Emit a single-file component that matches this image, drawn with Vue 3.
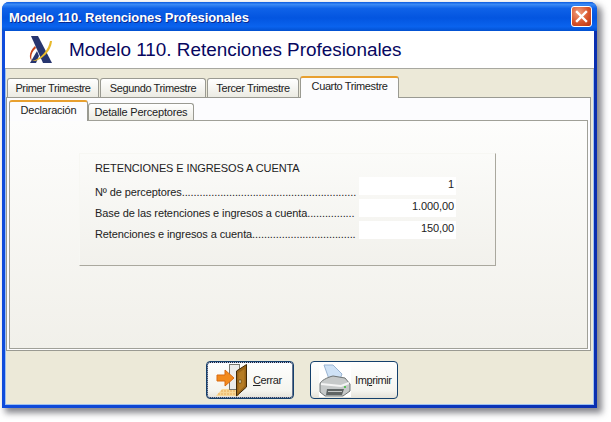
<script setup>
const outerTabs = [
  { label: 'Primer Trimestre', w: 92 },
  { label: 'Segundo Trimestre', w: 106 },
  { label: 'Tercer Trimestre', w: 92 },
  { label: 'Cuarto Trimestre', w: 99, active: true },
]
const rows = [
  { label: 'Nº de perceptores', dots: 59, value: '1' },
  { label: 'Base de las retenciones e ingresos a cuenta', dots: 16, value: '1.000,00' },
  { label: 'Retenciones e ingresos a cuenta', dots: 35, value: '150,00' },
]
</script>

<template>
  <div class="page">
    <div class="window">
      <div class="titlebar">
        <span class="title">Modelo 110. Retenciones Profesionales</span>
        <button class="close" aria-label="Cerrar">
          <svg width="13" height="13" viewBox="0 0 13 13"><path d="M2 2 L11 11 M11 2 L2 11" stroke="#fff" stroke-width="2.4" stroke-linecap="square" fill="none" /></svg>
        </button>
      </div>
      <div class="client">
        <div class="header">
          <svg class="logo" width="25" height="29" viewBox="0 0 25 29">
            <path d="M2 1 H9 L23 28 H14 Z" fill="#27356f" />
            <path d="M1 28 L8 16 L10 21 L7 28 Z" fill="#27356f" />
            <path d="M6 11 C1 15 -1 23 3 26 C1 22 3 16 7 13 Z" fill="#c8441a" />
            <path d="M21 6 C20 14 12 24 3 26 C10 27 22 18 23 6 Z" fill="#e8b92c" />
          </svg>
          <span class="heading">Modelo 110. Retenciones Profesionales</span>
        </div>
        <div class="body">
          <div class="tabs outer">
            <div v-for="t in outerTabs" :key="t.label" class="tab" :class="{ active: t.active }" :style="{ width: t.w + 'px' }">{{ t.label }}</div>
          </div>
          <div class="outer-panel">
            <div class="tabs inner">
              <div class="tab active first">Declaración</div>
              <div class="tab second">Detalle Perceptores</div>
            </div>
            <div class="inner-panel">
              <section class="group">
                <h2 class="group-title">RETENCIONES E INGRESOS A CUENTA</h2>
                <div class="fields">
                  <div class="labels">
                    <span v-for="r in rows" :key="r.label" class="row-label">{{ r.label }}{{ '.'.repeat(r.dots) }}</span>
                  </div>
                  <div class="values">
                    <span v-for="r in rows" :key="r.label" class="row-value">{{ r.value }}</span>
                  </div>
                </div>
              </section>
            </div>
          </div>
          <div class="actions">
            <button class="btn focus">
              <svg width="34" height="34" viewBox="0 0 34 34">
                <path d="M1 33 L7 26 H24 V33 Z" fill="#f8d898" />
                <path d="M3 31 H23 M6 28 H23" stroke="#e8ac58" stroke-width="1" stroke-dasharray="2 1" />
                <rect x="14.5" y="1.5" width="10" height="25" fill="#ececea" stroke="#77776f" />
                <path d="M21.5 8 L31.5 1.5 V24 L21.5 33 Z" fill="#9a6518" stroke="#3f2806" />
                <path d="M23.5 10 L29.5 6 V23 L23.5 29 Z" fill="#b57c24" />
                <rect x="24" y="17" width="2" height="3" fill="#f5ecc0" stroke="#3f2806" stroke-width="0.5" />
                <path d="M2 12 H10 V7 L19 15 L10 23 V18 H2 Z" fill="#f28a1c" stroke="#d96a10" />
              </svg>
              <span class="btn-label"><u>C</u>errar</span>
            </button>
            <button class="btn">
              <svg class="printer" width="32" height="33" viewBox="0 0 32 33">
                <rect width="32" height="33" fill="#fff" />
                <path d="M5 1 H14 L23 10 L21 15 H10 Z" fill="#cfe2f6" stroke="#9ab4d2" />
                <path d="M1 20 C1 17 9 13 14 12 L26 14 L31 20 V27 L24 32 H6 L1 28 Z" fill="#c6c9c9" stroke="#6f7474" />
                <path d="M2 20 L22 22 L30 19" fill="none" stroke="#f4f4f4" stroke-width="2" />
                <path d="M8 25 H25 L23 31 H7 Z" fill="#5f6464" />
                <path d="M9 27.5 H23" stroke="#c5c8c8" />
                <rect x="25" y="22" width="2" height="2" fill="#5ac05a" />
              </svg>
              <span class="btn-label">Im<u>p</u>rimir</span>
            </button>
          </div>
        </div>
      </div>
    </div>
  </div>
</template>

<style>
html, body { margin: 0; background: #fff; }
</style>

<style scoped>
.page {
  width: 611px;
  height: 422px;
  padding: 2px 0 0 2px;
  box-sizing: border-box;
  background: #fff;
  overflow: hidden;
  font-family: "Liberation Sans", Arial, sans-serif;
}
.window {
  width: 595px;
  height: 406px;
  display: flex;
  flex-direction: column;
  border-radius: 7px 7px 0 0;
  background: linear-gradient(to right, #0f4cdc, #0a2fb0);
  box-shadow: 4px 4px 6px 1px rgba(70, 70, 80, 0.65);
  padding: 0 3px 3px;
  box-sizing: border-box;
}
.titlebar {
  height: 29px;
  margin: 0 -3px;
  padding: 0 5px 0 7px;
  flex: none;
  display: flex;
  align-items: center;
  justify-content: space-between;
  border-radius: 7px 7px 0 0;
  background: linear-gradient(#0a5ae0 0%, #3b8af5 8%, #0f62e8 22%, #0355e0 55%, #0a63ee 85%, #0250d0 100%);
}
.title {
  padding-top: 1px;
  color: #fff;
  font-size: 13px;
  font-weight: 700;
  letter-spacing: -0.1px;
  text-shadow: 1px 1px 0 #0a2a90;
}
.close {
  width: 21px;
  height: 21px;
  padding: 0;
  display: flex;
  align-items: center;
  justify-content: center;
  border: 1px solid #fff;
  border-radius: 3px;
  background: radial-gradient(circle at 35% 30%, #f0a080, #d9552c 55%, #b83212);
}
.client {
  flex: 1;
  min-height: 0;
  display: flex;
  flex-direction: column;
  background: #ece9d8;
  box-shadow: inset 1px 0 0 #9cc0f0, inset -1px 0 0 #9cc0f0, inset 0 -1px 0 #9cc0f0;
}
.header {
  height: 38px;
  box-sizing: border-box;
  flex: none;
  display: flex;
  align-items: center;
  background: #fff;
  border-bottom: 1px solid #a8a8a0;
}
.logo {
  margin-left: 24px;
}
.heading {
  margin-left: 15px;
  color: #07075f;
  font-size: 18.9px;
}
.body {
  flex: 1;
  min-height: 0;
  display: flex;
  flex-direction: column;
  padding: 8px 3px 0 1px;
}
.tabs {
  display: flex;
  flex: none;
  color: #222;
  font-size: 11px;
}
.outer {
  height: 20px;
  padding-left: 1px;
  gap: 1px;
  align-items: flex-end;
  position: relative;
  z-index: 1;
  letter-spacing: -0.38px;
}
.tab {
  height: 19px;
  line-height: 19px;
  text-align: center;
  box-sizing: border-box;
  border: 1px solid #9a9a92;
  border-bottom: 0;
  border-radius: 3px 3px 0 0;
  background: linear-gradient(#fff, #ecebe3);
}
.tab.active {
  height: 22px;
  line-height: 16px;
  border-top: 2px solid #e8a030;
  background: #fcfcfe;
  margin-bottom: -1px;
}
.outer-panel {
  height: 254px;
  flex: none;
  box-sizing: border-box;
  padding: 2px 2px 1px;
  background: #fcfcfe;
  border: 1px solid #9a9a92;
}
.inner {
  height: 20px;
  position: relative;
  z-index: 1;
  align-items: flex-end;
  letter-spacing: -0.2px;
}
.inner .first {
  width: 79px;
  height: 21px;
}
.inner .second {
  width: 106px;
  height: 17px;
  line-height: 16px;
}
.inner-panel {
  height: 229px;
  box-sizing: border-box;
  padding: 32px 0 0 69px;
  border: 1px solid #a0a098;
  background: linear-gradient(#fdfdfc, #f1f0ea);
}
.group {
  width: 417px;
  height: 113px;
  box-sizing: border-box;
  padding: 7px 39px 0 15px;
  border: 1px solid #f7f7f3;
  border-right-color: #aaa89e;
  border-bottom-color: #aaa89e;
  background: linear-gradient(#fbfbf9, #f2f1ec);
  letter-spacing: -0.1px;
}
.group-title {
  margin: 0 0 2px;
  font-size: 11px;
  font-weight: 400;
  line-height: 14px;
  color: #222;
}
.fields {
  display: flex;
  justify-content: space-between;
  color: #222;
  font-size: 11px;
}
.labels {
  display: flex;
  flex-direction: column;
  gap: 8px;
  padding-top: 9px;
}
.row-label {
  line-height: 13px;
  white-space: nowrap;
}
.values {
  display: flex;
  flex-direction: column;
  gap: 4px;
}
.row-value {
  width: 97px;
  height: 18px;
  box-sizing: border-box;
  padding-right: 2px;
  text-align: right;
  line-height: 15px;
  background: #fff;
}
.actions {
  flex: 1;
  display: flex;
  gap: 16px;
  padding: 10px 0 0 200px;
}
.btn {
  width: 88px;
  height: 38px;
  padding: 0 0 0 8px;
  display: flex;
  align-items: center;
  gap: 4px;
  border: 1px solid #14406c;
  border-radius: 4px;
  background: linear-gradient(#fff, #f4f4ee 80%, #e4e2d8);
  color: #222;
  font-family: inherit;
  font-size: 11px;
  letter-spacing: -0.4px;
}
.btn.focus {
  box-shadow: inset 0 0 0 1px #a8c4ec;
  outline: 1px dotted #223;
  outline-offset: -2px;
}
.printer {
  flex: none;
}
.btn-label u {
  text-decoration: underline;
}
</style>
